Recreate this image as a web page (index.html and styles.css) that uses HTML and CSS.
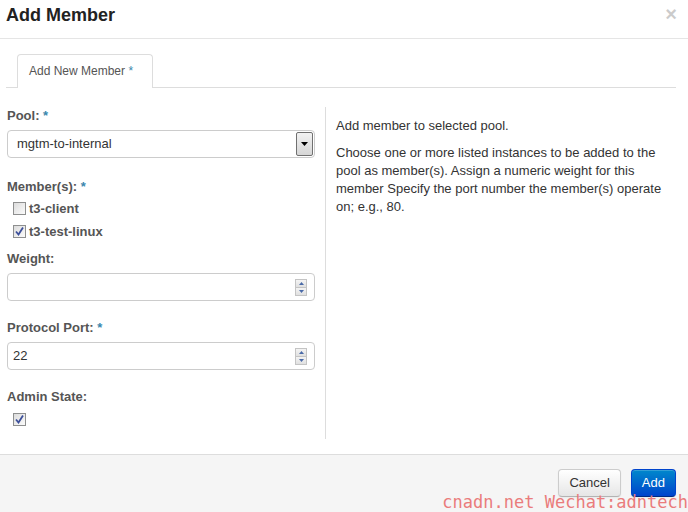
FILE: index.html
```html
<!DOCTYPE html>
<html>
<head>
<meta charset="utf-8">
<link rel="stylesheet" href="styles.css">
</head>
<body>
<div class="modal">
  <div class="modal-header">
    <h3 class="title">Add Member</h3>
    <span class="close">×</span>
  </div>
  <div class="modal-body">
    <div class="tabs">
      <div class="tab">Add New Member <span class="req">*</span></div>
    </div>
    <div class="content">
      <div class="form">
        <div class="label">Pool: <span class="req">*</span></div>
        <div class="select">
          <span class="select-text">mgtm-to-internal</span>
          <span class="select-btn"><svg width="7" height="4" viewBox="0 0 7 4"><path d="M0 0H7L3.5 4Z" fill="#000"/></svg></span>
        </div>
        <div class="label gap-m">Member(s): <span class="req">*</span></div>
        <div class="check-row first">
          <span class="cb"></span><span class="cb-label">t3-client</span>
        </div>
        <div class="check-row">
          <span class="cb"><svg width="9" height="9" viewBox="0 0 9 9"><path d="M1 4.5L3.5 7.5L8 0.5" fill="none" stroke="#3c4f9a" stroke-width="1.8"/></svg></span><span class="cb-label">t3-test-linux</span>
        </div>
        <div class="label small-gap">Weight:</div>
        <div class="input">
          <span class="input-text"></span>
          <span class="spin"><span class="spin-up"><svg width="5" height="3" viewBox="0 0 5 3"><path d="M0 3H5L2.5 0Z" fill="#4a6aa8"/></svg></span><span class="spin-down"><svg width="5" height="3" viewBox="0 0 5 3"><path d="M0 0H5L2.5 3Z" fill="#4a6aa8"/></svg></span></span>
        </div>
        <div class="label gap">Protocol Port: <span class="req">*</span></div>
        <div class="input">
          <span class="input-text">22</span>
          <span class="spin"><span class="spin-up"><svg width="5" height="3" viewBox="0 0 5 3"><path d="M0 3H5L2.5 0Z" fill="#4a6aa8"/></svg></span><span class="spin-down"><svg width="5" height="3" viewBox="0 0 5 3"><path d="M0 0H5L2.5 3Z" fill="#4a6aa8"/></svg></span></span>
        </div>
        <div class="label gap">Admin State:</div>
        <div class="check-row admin">
          <span class="cb"><svg width="9" height="9" viewBox="0 0 9 9"><path d="M1 4.5L3.5 7.5L8 0.5" fill="none" stroke="#3c4f9a" stroke-width="1.8"/></svg></span>
        </div>
      </div>
      <div class="help">
        <p>Add member to selected pool.</p>
        <p>Choose one or more listed instances to be added to the pool as member(s). Assign a numeric weight for this member Specify the port number the member(s) operate on; e.g., 80.</p>
      </div>
    </div>
  </div>
  <div class="modal-footer">
    <button class="btn">Cancel</button>
    <button class="btn btn-primary">Add</button>
  </div>
  <div class="watermark">cnadn.net Wechat:adntech</div>
</div>
</body>
</html>
```
FILE: styles.css
```css
* { box-sizing: border-box; }
html, body { margin: 0; padding: 0; }
body {
  font-family: "Liberation Sans", Arial, sans-serif;
  font-size: 13px;
  line-height: 18px;
  color: #333;
  background: #fff;
}
.modal {
  position: relative;
  width: 688px;
  height: 512px;
  overflow: hidden;
  display: flex;
  flex-direction: column;
}
.modal-header {
  display: flex;
  justify-content: space-between;
  align-items: flex-start;
  padding: 2px 11px 8px 6px;
  border-bottom: 1px solid #e5e5e5;
  height: 39px;
}
.title {
  margin: 0;
  font-size: 18px;
  font-weight: bold;
  line-height: 27px;
  color: #222;
}
.close {
  font-size: 20px;
  font-weight: bold;
  line-height: 24px;
  color: #000;
  opacity: 0.2;
}
.modal-body {
  padding: 15px 12px 0 6px;
  flex: 1;
}
.tabs {
  display: flex;
  border-bottom: 1px solid #ddd;
  padding-left: 11px;
}
.tab {
  border: 1px solid #ddd;
  border-bottom: none;
  border-radius: 4px 4px 0 0;
  padding: 7px 11px 7px 11px;
  font-size: 12px;
  line-height: 18px;
  color: #555;
  background: #fff;
  margin-bottom: -1px;
  height: 34px;
  width: 136px;
}
.req { color: #3a87ad; }
.content {
  display: flex;
  margin-top: 19px;
}
.form {
  width: 309px;
  padding-left: 1px;
  padding-bottom: 8px;
  margin-right: 10px;
}
.label {
  font-weight: bold;
  color: #555;
  line-height: 18px;
  margin-bottom: 5px;
}
.label.gap { margin-top: 18px; }
.label.gap-m { margin-top: 20px; }
.label.small-gap { margin-top: 7px; }
.select, .input {
  display: flex;
  align-items: center;
  justify-content: space-between;
  width: 308px;
  height: 28px;
  border: 1px solid #ccc;
  border-radius: 4px;
  padding-left: 9px;
  background: #fff;
}
.input { padding-left: 5px; padding-right: 7px; }
.select { padding-right: 1px; }
.select-text, .input-text { color: #333; }
.select-btn {
  width: 17px;
  height: 24px;
  border: 1px solid #707070;
  border-radius: 2px;
  background: linear-gradient(#f2f2f2, #d6d6d6);
  display: flex;
  align-items: center;
  justify-content: center;
}
.spin {
  display: flex;
  flex-direction: column;
  width: 12px;
  height: 17px;
  border: 1px solid #c4c4c4;
}
.spin-up, .spin-down {
  flex: 1;
  display: flex;
  align-items: center;
  justify-content: center;
  background: linear-gradient(#f4f4f4, #e0e0e0);
}
.spin-up { border-bottom: 1px solid #c4c4c4; }
.check-row {
  display: flex;
  align-items: center;
  height: 23px;
  padding-left: 6px;
}
.check-row.first { margin-top: -4px; }
.check-row.admin { margin-top: -3px; }
.cb {
  width: 13px;
  height: 13px;
  border: 1px solid #8e8f8f;
  background: linear-gradient(135deg, #dcdcdc, #fbfbfb);
  display: flex;
  align-items: center;
  justify-content: center;
  margin-right: 3px;
}
.cb-label {
  font-weight: bold;
  color: #555;
}
.help {
  flex: 1;
  border-left: 1px solid #ddd;
  padding: 10px 0 0 10px;
}
.help p { margin: 0 0 9px; }
.modal-footer {
  height: 58px;
  border-top: 1px solid #ddd;
  background: #f5f5f5;
  display: flex;
  justify-content: flex-end;
  align-items: flex-start;
  gap: 10px;
  padding: 14px 12px 0 0;
}
.btn {
  font-family: "Liberation Sans", Arial, sans-serif;
  font-size: 13px;
  line-height: 18px;
  height: 28px;
  padding: 4px 10px;
  border-radius: 4px;
  border: 1px solid #ccc;
  border-bottom-color: #b3b3b3;
  color: #333;
  background: linear-gradient(#ffffff, #e6e6e6);
  box-shadow: inset 0 1px 0 rgba(255,255,255,.2), 0 1px 2px rgba(0,0,0,.05);
}
.btn-primary {
  color: #fff;
  border-color: #0044cc #0044cc #002a80;
  background: linear-gradient(#0088cc, #0044cc);
}
.watermark {
  position: absolute;
  right: 0;
  bottom: 0;
  font-family: "DejaVu Sans Mono", monospace;
  font-size: 17px;
  line-height: 19px;
  color: #ea7c7c;
  white-space: nowrap;
}
```
